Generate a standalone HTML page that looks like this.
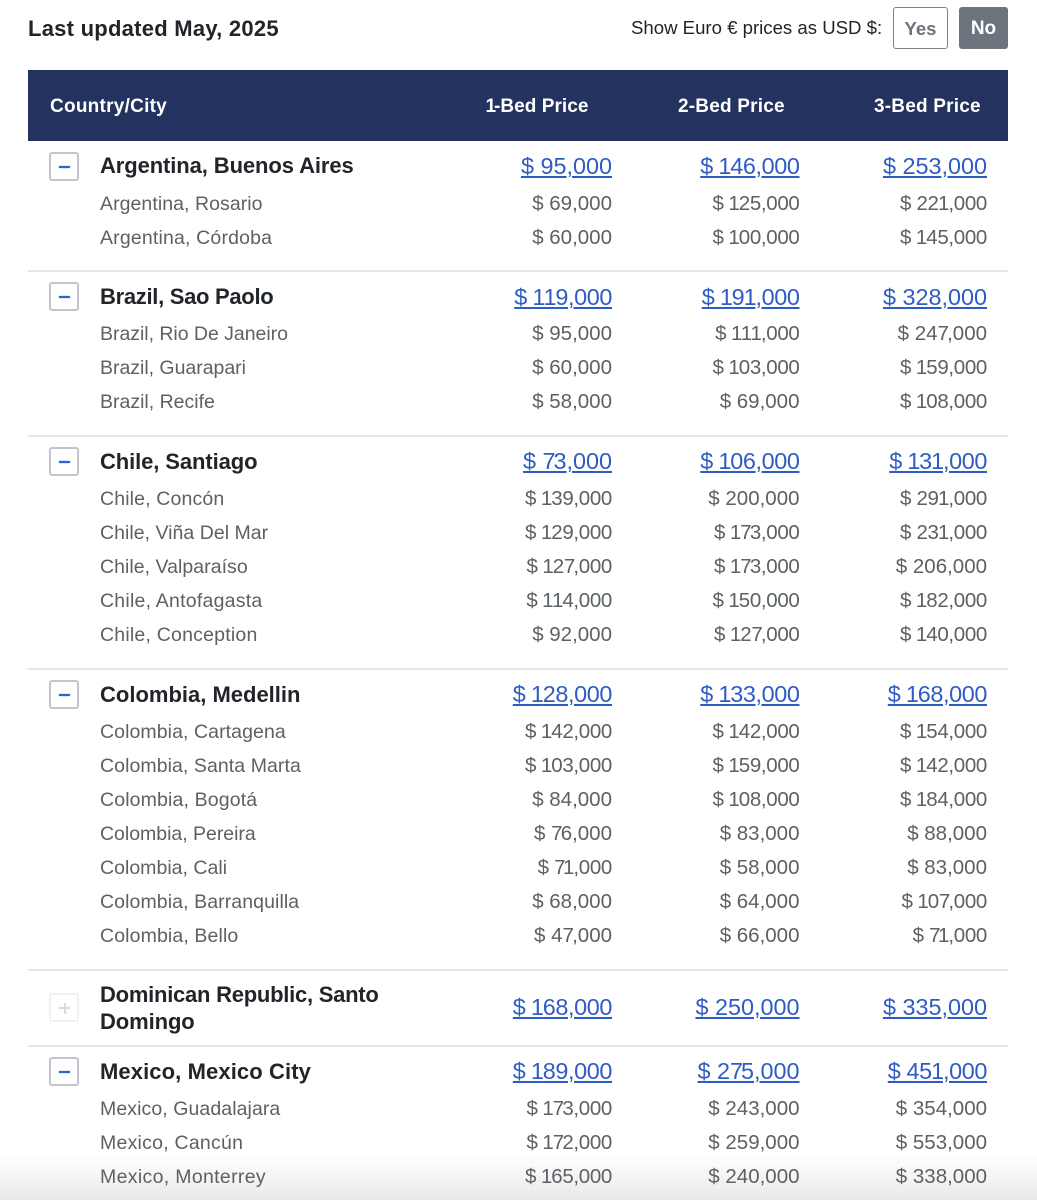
<!DOCTYPE html>
<html><head><meta charset="utf-8">
<style>
html,body{margin:0;padding:0;background:#fff}
#w{position:relative;width:1037px;height:1200px;overflow:hidden;background:#fff;font-family:"Liberation Sans",sans-serif}
.t{position:absolute;white-space:nowrap;height:26px;line-height:26px}
.n{left:100px;font-size:22px;font-weight:700;color:#212529}
.s{left:100px;font-size:19.5px;color:#5c6166}
.m,.v{text-align:right;width:160px;font-kerning:none}
.m{font-size:23.4px;color:#2f5cc4;text-decoration:underline;text-decoration-thickness:1.5px;text-underline-offset:2px}
.v{font-size:20.5px;color:#5c6166}
.m:has(b),.v:has(b){letter-spacing:-.016em}
.m b,.v b{font-weight:inherit;margin-left:-.03em;letter-spacing:-.05em}
.h b{font-weight:inherit;margin-left:-.08em;letter-spacing:-.11em}
.m i,.v i{font-style:normal;letter-spacing:-.09em}
.a{left:452px}.b{left:639.5px}.c{left:827px}
.h{position:absolute;top:93.5px;height:26px;line-height:26px;color:#fff;font-size:19px;font-weight:700;white-space:nowrap;letter-spacing:.2px}
.ln{position:absolute;left:28px;width:980px;height:2px;background:#e5e6ed}
.bx{position:absolute;left:49px;width:26px;height:25px;border:2px solid #c2c5cc;border-radius:3px;background:#fff}
.bx u{position:absolute;left:8px;top:12px;width:11px;height:2px;background:#2f62d8;box-shadow:0 0 1px #2f62d8}
#f{position:absolute;left:0;top:1155px;width:1037px;height:45px;background:linear-gradient(#fff,#e9e9e9)}
</style></head><body><div id="w">
<div id="f"></div>
<div class="t" style="left:28px;top:16px;font-size:22px;font-weight:700;color:#212529;letter-spacing:.25px">Last updated May, 2025</div>
<div class="t" style="left:631px;top:15px;font-size:18.6px;color:#212529">Show Euro € prices as USD $:</div>
<div style="position:absolute;left:893px;top:7px;width:53px;height:40px;border:1px solid #7d838a;border-radius:3px;text-align:center;line-height:42px;font-size:18.5px;font-weight:700;color:#6c757d">Yes</div>
<div style="position:absolute;left:959px;top:7px;width:49px;height:42px;background:#6c757d;border-radius:3px;text-align:center;line-height:44px;font-size:19px;font-weight:700;color:#fff">No</div>
<div style="position:absolute;left:28px;top:70px;width:980px;height:71px;background:#24325f"></div>
<div class="h" style="left:50px;letter-spacing:.25px">Country/City</div>
<div class="h" style="left:487px;letter-spacing:.05px"><b>1</b>-Bed Price</div>
<div class="h" style="left:678px">2-Bed Price</div>
<div class="h" style="left:874px">3-Bed Price</div>

<div class="bx" style="top:152px"><u></u></div>
<div class="t n" style="top:153px;letter-spacing:-.1px">Argentina, Buenos Aires</div><div class="t m a" style="top:153px">$ 95,000</div><div class="t m b" style="top:153px">$ <b>1</b>46,000</div><div class="t m c" style="top:153px">$ 253,000</div>
<div class="t s" style="top:191px;letter-spacing:.06px">Argentina, Rosario</div><div class="t v a" style="top:191px">$ 69,000</div><div class="t v b" style="top:191px">$ <b>1</b>25,000</div><div class="t v c" style="top:191px">$ 22<b>1</b>,000</div>
<div class="t s" style="top:225px;letter-spacing:.17px">Argentina, Córdoba</div><div class="t v a" style="top:225px">$ 60,000</div><div class="t v b" style="top:225px">$ <b>1</b>00,000</div><div class="t v c" style="top:225px">$ <b>1</b>45,000</div>
<div class="ln" style="top:270px"></div>

<div class="bx" style="top:282px"><u></u></div>
<div class="t n" style="top:284px;letter-spacing:-.3px">Brazil, Sao Paolo</div><div class="t m a" style="top:284px">$ <b>1</b><b>1</b>9,000</div><div class="t m b" style="top:284px">$ <b>1</b>9<b>1</b>,000</div><div class="t m c" style="top:284px">$ 328,000</div>
<div class="t s" style="top:321px;letter-spacing:-.03px">Brazil, Rio De Janeiro</div><div class="t v a" style="top:321px">$ 95,000</div><div class="t v b" style="top:321px">$ <b>1</b><b>1</b><b>1</b>,000</div><div class="t v c" style="top:321px">$ 24<i>7</i>,000</div>
<div class="t s" style="top:355px;letter-spacing:-.02px">Brazil, Guarapari</div><div class="t v a" style="top:355px">$ 60,000</div><div class="t v b" style="top:355px">$ <b>1</b>03,000</div><div class="t v c" style="top:355px">$ <b>1</b>59,000</div>
<div class="t s" style="top:389px">Brazil, Recife</div><div class="t v a" style="top:389px">$ 58,000</div><div class="t v b" style="top:389px">$ 69,000</div><div class="t v c" style="top:389px">$ <b>1</b>08,000</div>
<div class="ln" style="top:435px"></div>

<div class="bx" style="top:447px"><u></u></div>
<div class="t n" style="top:449px;letter-spacing:-.1px">Chile, Santiago</div><div class="t m a" style="top:448px">$ <i>7</i>3,000</div><div class="t m b" style="top:448px">$ <b>1</b>06,000</div><div class="t m c" style="top:448px">$ <b>1</b>3<b>1</b>,000</div>
<div class="t s" style="top:486px;letter-spacing:.14px">Chile, Concón</div><div class="t v a" style="top:486px">$ <b>1</b>39,000</div><div class="t v b" style="top:486px">$ 200,000</div><div class="t v c" style="top:486px">$ 29<b>1</b>,000</div>
<div class="t s" style="top:520px;letter-spacing:.03px">Chile, Viña Del Mar</div><div class="t v a" style="top:520px">$ <b>1</b>29,000</div><div class="t v b" style="top:520px">$ <b>1</b><i>7</i>3,000</div><div class="t v c" style="top:520px">$ 23<b>1</b>,000</div>
<div class="t s" style="top:554px;letter-spacing:.04px">Chile, Valparaíso</div><div class="t v a" style="top:554px">$ <b>1</b>2<i>7</i>,000</div><div class="t v b" style="top:554px">$ <b>1</b><i>7</i>3,000</div><div class="t v c" style="top:554px">$ 206,000</div>
<div class="t s" style="top:588px;letter-spacing:.23px">Chile, Antofagasta</div><div class="t v a" style="top:588px">$ <b>1</b><b>1</b>4,000</div><div class="t v b" style="top:588px">$ <b>1</b>50,000</div><div class="t v c" style="top:588px">$ <b>1</b>82,000</div>
<div class="t s" style="top:622px;letter-spacing:.21px">Chile, Conception</div><div class="t v a" style="top:622px">$ 92,000</div><div class="t v b" style="top:622px">$ <b>1</b>2<i>7</i>,000</div><div class="t v c" style="top:622px">$ <b>1</b>40,000</div>
<div class="ln" style="top:668px"></div>

<div class="bx" style="top:680px"><u></u></div>
<div class="t n" style="top:682px">Colombia, Medellin</div><div class="t m a" style="top:681px">$ <b>1</b>28,000</div><div class="t m b" style="top:681px">$ <b>1</b>33,000</div><div class="t m c" style="top:681px">$ <b>1</b>68,000</div>
<div class="t s" style="top:719px;letter-spacing:.08px">Colombia, Cartagena</div><div class="t v a" style="top:719px">$ <b>1</b>42,000</div><div class="t v b" style="top:719px">$ <b>1</b>42,000</div><div class="t v c" style="top:719px">$ <b>1</b>54,000</div>
<div class="t s" style="top:753px;letter-spacing:.07px">Colombia, Santa Marta</div><div class="t v a" style="top:753px">$ <b>1</b>03,000</div><div class="t v b" style="top:753px">$ <b>1</b>59,000</div><div class="t v c" style="top:753px">$ <b>1</b>42,000</div>
<div class="t s" style="top:787px;letter-spacing:.14px">Colombia, Bogotá</div><div class="t v a" style="top:787px">$ 84,000</div><div class="t v b" style="top:787px">$ <b>1</b>08,000</div><div class="t v c" style="top:787px">$ <b>1</b>84,000</div>
<div class="t s" style="top:821px;letter-spacing:-.02px">Colombia, Pereira</div><div class="t v a" style="top:821px">$ <i>7</i>6,000</div><div class="t v b" style="top:821px">$ 83,000</div><div class="t v c" style="top:821px">$ 88,000</div>
<div class="t s" style="top:855px;letter-spacing:.02px">Colombia, Cali</div><div class="t v a" style="top:855px">$ <i>7</i><b>1</b>,000</div><div class="t v b" style="top:855px">$ 58,000</div><div class="t v c" style="top:855px">$ 83,000</div>
<div class="t s" style="top:889px;letter-spacing:.09px">Colombia, Barranquilla</div><div class="t v a" style="top:889px">$ 68,000</div><div class="t v b" style="top:889px">$ 64,000</div><div class="t v c" style="top:889px">$ <b>1</b>0<i>7</i>,000</div>
<div class="t s" style="top:923px;letter-spacing:.12px">Colombia, Bello</div><div class="t v a" style="top:923px">$ 4<i>7</i>,000</div><div class="t v b" style="top:923px">$ 66,000</div><div class="t v c" style="top:923px">$ <i>7</i><b>1</b>,000</div>
<div class="ln" style="top:969px"></div>

<div class="bx" style="top:993px;border-color:#f1f1f3"><u style="background:#d8dade;box-shadow:none"></u><u style="background:#d8dade;box-shadow:none;left:12.5px;top:7.5px;width:2px;height:11px"></u></div>
<div class="t n" style="top:982px;letter-spacing:-.25px">Dominican Republic, Santo</div>
<div class="t n" style="top:1009px;letter-spacing:-.1px">Domingo</div>
<div class="t m a" style="top:994px">$ <b>1</b>68,000</div><div class="t m b" style="top:994px">$ 250,000</div><div class="t m c" style="top:994px">$ 335,000</div>
<div class="ln" style="top:1045px"></div>

<div class="bx" style="top:1057px"><u></u></div>
<div class="t n" style="top:1059px;letter-spacing:.1px">Mexico, Mexico City</div><div class="t m a" style="top:1058px">$ <b>1</b>89,000</div><div class="t m b" style="top:1058px">$ 2<i>7</i>5,000</div><div class="t m c" style="top:1058px">$ 45<b>1</b>,000</div>
<div class="t s" style="top:1096px;letter-spacing:.08px">Mexico, Guadalajara</div><div class="t v a" style="top:1096px">$ <b>1</b><i>7</i>3,000</div><div class="t v b" style="top:1096px">$ 243,000</div><div class="t v c" style="top:1096px">$ 354,000</div>
<div class="t s" style="top:1130px;letter-spacing:.24px">Mexico, Cancún</div><div class="t v a" style="top:1130px">$ <b>1</b><i>7</i>2,000</div><div class="t v b" style="top:1130px">$ 259,000</div><div class="t v c" style="top:1130px">$ 553,000</div>
<div class="t s" style="top:1164px;letter-spacing:.33px">Mexico, Monterrey</div><div class="t v a" style="top:1164px">$ <b>1</b>65,000</div><div class="t v b" style="top:1164px">$ 240,000</div><div class="t v c" style="top:1164px">$ 338,000</div>
</div></body></html>
